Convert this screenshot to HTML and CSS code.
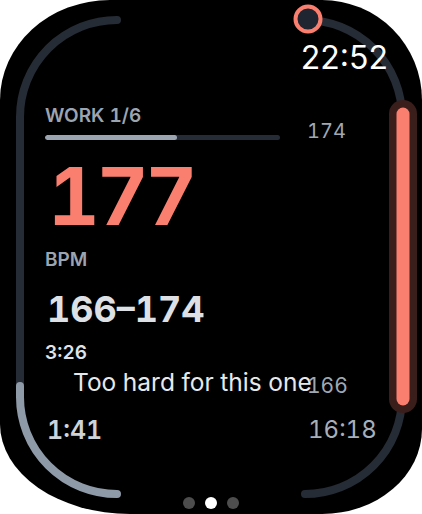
FILE: index.html
```html
<!DOCTYPE html>
<html>
<head>
<meta charset="utf-8">
<link rel="stylesheet" href="styles.css">
</head>
<body>
<div class="screen">
  <svg class="ring" viewBox="0 0 422 514" width="422" height="514">
    <path class="track" d="M117 20 A97 97 0 0 0 20 117 L20 386"/>
    <path class="track done" d="M20 386 L20 397 A97 97 0 0 0 117 494"/>
    <path class="track" d="M305 20 A97 97 0 0 1 402 117 L402 397 A97 97 0 0 1 305 494"/>
    <line class="halo" x1="403" y1="114" x2="403" y2="399"/>
    <line class="zone" x1="403" y1="114" x2="403" y2="399"/>
    <circle class="marker" cx="308" cy="19" r="12.5"/>
  </svg>
  <div class="content">
    <div class="clock">22:52</div>
    <div class="row row-work">
      <div class="work">
        <div class="label">WORK 1/6</div>
        <div class="bar"><div class="bar-fill" style="width:56%"></div></div>
      </div>
      <div class="side side-top">174</div>
    </div>
    <div class="hr">177</div>
    <div class="label bpm">BPM</div>
    <div class="range">166–174</div>
    <div class="elapsed">3:26</div>
    <div class="row row-msg">
      <div class="msg">Too hard for this one</div>
      <div class="side side-mid">166</div>
    </div>
    <div class="row row-times">
      <div class="left-time">1:41</div>
      <div class="side right-time">16:18</div>
    </div>
  </div>
  <div class="dots">
    <span class="dot"></span>
    <span class="dot on"></span>
    <span class="dot"></span>
  </div>
</div>
</body>
</html>
```
FILE: styles.css
```css
html, body {
  margin: 0;
  padding: 0;
  background: #ffffff;
}
body {
  font-family: Inter, "Liberation Sans", sans-serif;
  font-variant-numeric: tabular-nums;
}
.screen {
  position: relative;
  width: 422px;
  height: 514px;
  background: #000000;
  border-radius: 110px 100px 100px 130px / 100px 100px 85px 90px;
  display: flex;
  flex-direction: column;
  overflow: hidden;
}
.ring {
  position: absolute;
  left: 0;
  top: 0;
}
.track {
  fill: none;
  stroke: #262c35;
  stroke-width: 8;
  stroke-linecap: round;
}
.track.done {
  stroke: #8f9aa8;
}
.halo {
  stroke: #3a1e1c;
  stroke-width: 28;
  stroke-linecap: round;
}
.zone {
  stroke: #fb7f6f;
  stroke-width: 13;
  stroke-linecap: round;
}
.marker {
  fill: #1f2631;
  stroke: #fb7f6f;
  stroke-width: 4;
}
.content {
  position: relative;
  display: flex;
  flex-direction: column;
  padding: 0 0 0 45px;
  line-height: 1;
}
.clock {
  align-self: flex-end;
  margin-top: 42px;
  margin-right: 34px;
  font-size: 32px;
  font-weight: 400;
  color: #ffffff;
  font-variant-numeric: normal;
}
.row {
  display: grid;
  grid-template-columns: 262px 1fr;
}
.row-work {
  margin-top: 32px;
}
.label {
  font-size: 19px;
  font-weight: 600;
  color: #9ba5b2;
}
.bar {
  margin-top: 10px;
  width: 235px;
  height: 5px;
  border-radius: 3px;
  background: #262c35;
  overflow: hidden;
}
.bar-fill {
  height: 100%;
  border-radius: 3px;
  background: #9ba5b2;
}
.side {
  grid-column: 2;
  grid-row: 1;
  color: #a0a8b3;
}
.side-top {
  margin-top: 15px;
  font-size: 20px;
}
.hr {
  margin-top: 15px;
  margin-left: 3px;
  font-size: 80px;
  font-weight: 700;
  letter-spacing: -3px;
  color: #fb7f6f;
}
.bpm {
  margin-top: 14px;
}
.range {
  margin-top: 22px;
  margin-left: 2px;
  font-size: 36px;
  font-weight: 700;
  color: #dde1e6;
}
.elapsed {
  margin-top: 16px;
  font-size: 19px;
  font-weight: 600;
  color: #dfe3e8;
}
.row-msg {
  margin-top: 8px;
}
.msg {
  grid-column: 1 / -1;
  grid-row: 1;
  margin-left: 28px;
  font-size: 24.5px;
  font-weight: 400;
  color: #e6e9ec;
  white-space: nowrap;
}
.side-mid {
  margin-top: 5px;
  font-size: 21px;
}
.row-times {
  margin-top: 22px;
}
.left-time {
  grid-column: 1;
  grid-row: 1;
  margin-left: 2px;
  font-size: 25px;
  font-weight: 600;
  color: #cdd3da;
}
.right-time {
  font-size: 24px;
  color: #a6afba;
  margin-left: 1px;
}
.dots {
  position: relative;
  margin-top: auto;
  padding-bottom: 5px;
  display: flex;
  justify-content: center;
  gap: 10px;
}
.dot {
  width: 12px;
  height: 12px;
  border-radius: 50%;
  background: #4d4d4d;
}
.dot.on {
  background: #ffffff;
}
```
